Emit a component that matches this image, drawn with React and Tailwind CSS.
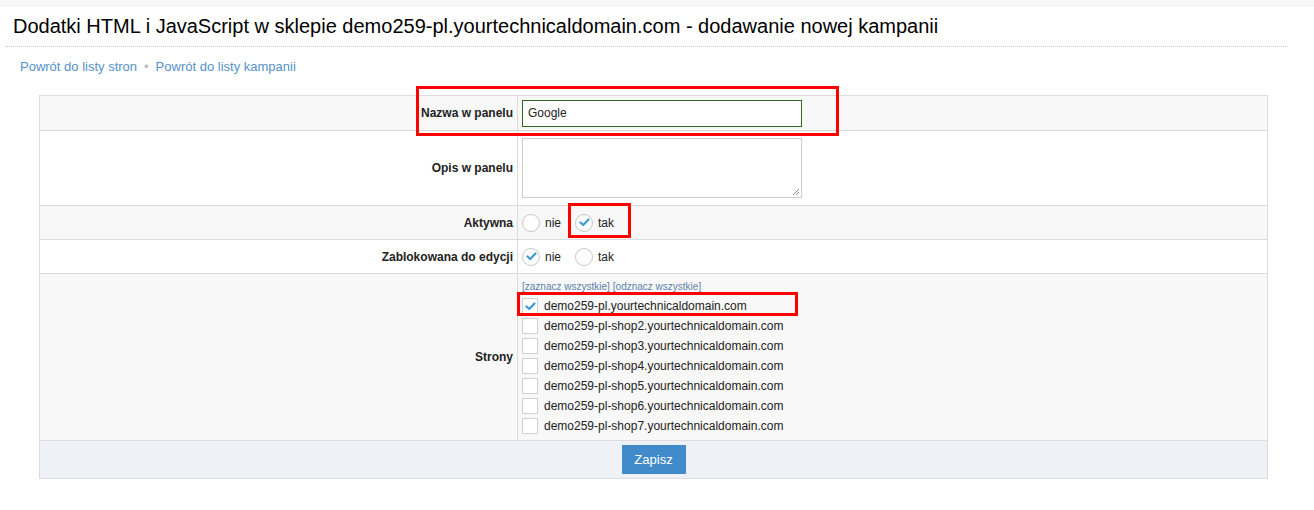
import React from 'react';

const font = { fontFamily: '"Liberation Sans", Arial, sans-serif' };

function Radio({ checked, label }) {
  return (
    <label className="flex items-center gap-[5px]">
      <span className="flex h-[18px] w-[18px] items-center justify-center rounded-full border border-[#c8c8c8] bg-white">
        {checked && (
          <svg width="11" height="9" viewBox="0 0 11 9">
            <path d="M1.5 4.5 L4.2 7 L9.5 1.5" fill="none" stroke="#3c9ad6" strokeWidth="2.2" strokeLinecap="round" strokeLinejoin="round" />
          </svg>
        )}
      </span>
      <span className="text-[12px] text-[#222]">{label}</span>
    </label>
  );
}

function Check({ checked, label }) {
  return (
    <div className="flex h-[20px] items-center gap-[6px]">
      <span className="flex h-[16px] w-[16px] items-center justify-center border border-[#d0d0d0] bg-white">
        {checked && (
          <svg width="11" height="9" viewBox="0 0 11 9">
            <path d="M1.5 4.5 L4.2 7 L9.5 1.5" fill="none" stroke="#3c9ad6" strokeWidth="2.2" strokeLinecap="round" strokeLinejoin="round" />
          </svg>
        )}
      </span>
      <span className="text-[12px] text-[#222]">{label}</span>
    </div>
  );
}

function Row({ label, bg, h, children }) {
  return (
    <div className={`flex border-t border-[#dcdcdc] ${bg} ${h}`}>
      <div className="flex w-[478px] shrink-0 items-center justify-end border-r border-[#dcdcdc] pr-[4px] text-[12px] font-bold text-[#222]">
        {label}
      </div>
      <div className="flex flex-1 items-center pl-[4px]">{children}</div>
    </div>
  );
}

const shops = [
  'demo259-pl.yourtechnicaldomain.com',
  'demo259-pl-shop2.yourtechnicaldomain.com',
  'demo259-pl-shop3.yourtechnicaldomain.com',
  'demo259-pl-shop4.yourtechnicaldomain.com',
  'demo259-pl-shop5.yourtechnicaldomain.com',
  'demo259-pl-shop6.yourtechnicaldomain.com',
  'demo259-pl-shop7.yourtechnicaldomain.com',
];

export default function App() {
  return (
    <div className="relative min-h-[510px] bg-white" style={font}>
      <div className="h-[7px] bg-[#f7f7f7]" />
      <div className="px-[5px]">
        <h1 className="pl-[8px] pt-[7px] text-[20px] leading-[24px] text-black">
          Dodatki HTML i JavaScript w sklepie demo259-pl.yourtechnicaldomain.com - dodawanie nowej kampanii
        </h1>
        <div className="mt-[8px] w-[1283px] border-t border-dotted border-[#cfcfcf]" />
      </div>
      <div className="flex items-center gap-[7px] pl-[20px] pt-[12px] text-[13px] leading-[15px] text-[#5592c8]">
        <a>Powrót do listy stron</a>
        <span className="text-[#bbb]">•</span>
        <a>Powrót do listy kampanii</a>
      </div>

      <div className="ml-[39px] mt-[21px] w-[1229px] border-x border-b border-[#dcdcdc]">
        <Row label="Nazwa w panelu" bg="bg-[#f8f8f8]" h="h-[35px]">
          <div className="flex h-[27px] w-[280px] items-center border border-[#2d6a1e] bg-white px-[5px] text-[12px] text-[#222]">
            Google
          </div>
        </Row>
        <Row label="Opis w panelu" bg="bg-white" h="h-[75px]">
          <div className="relative h-[60px] w-[280px] border border-[#cfcfcf] bg-white">
            <svg className="absolute bottom-[1px] right-[1px]" width="8" height="8" viewBox="0 0 8 8">
              <path d="M7 1 L1 7 M7 4 L4 7" stroke="#888" strokeWidth="1" />
            </svg>
          </div>
        </Row>
        <Row label="Aktywna" bg="bg-[#f8f8f8]" h="h-[34px]">
          <div className="flex items-center gap-[14px]">
            <Radio label="nie" />
            <Radio checked label="tak" />
          </div>
        </Row>
        <Row label="Zablokowana do edycji" bg="bg-white" h="h-[34px]">
          <div className="flex items-center gap-[14px]">
            <Radio checked label="nie" />
            <Radio label="tak" />
          </div>
        </Row>
        <Row label="Strony" bg="bg-[#f8f8f8]" h="h-[167px]">
          <div className="flex flex-col pt-[3px]">
            <div className="mb-[3px] flex gap-[3px] text-[10px] leading-[12px] text-[#5b7fa8]">
              <span>[zaznacz wszystkie]</span>
              <span>[odznacz wszystkie]</span>
            </div>
            {shops.map((s, i) => (
              <Check key={s} checked={i === 0} label={s} />
            ))}
          </div>
        </Row>
        <div className="flex h-[38px] items-center justify-center border-t border-[#dcdcdc] bg-[#eef1f5]">
          <button className="h-[29px] w-[64px] bg-[#428bca] text-[13px] text-white">Zapisz</button>
        </div>
      </div>

      <div className="pointer-events-none absolute left-[416px] top-[86px] h-[50px] w-[423px] border-[3px] border-[#f00]" />
      <div className="pointer-events-none absolute left-[568px] top-[203px] h-[35px] w-[63px] border-[3px] border-[#f00]" />
      <div className="pointer-events-none absolute left-[517px] top-[292px] h-[24px] w-[281px] border-[3px] border-[#f00]" />
    </div>
  );
}
